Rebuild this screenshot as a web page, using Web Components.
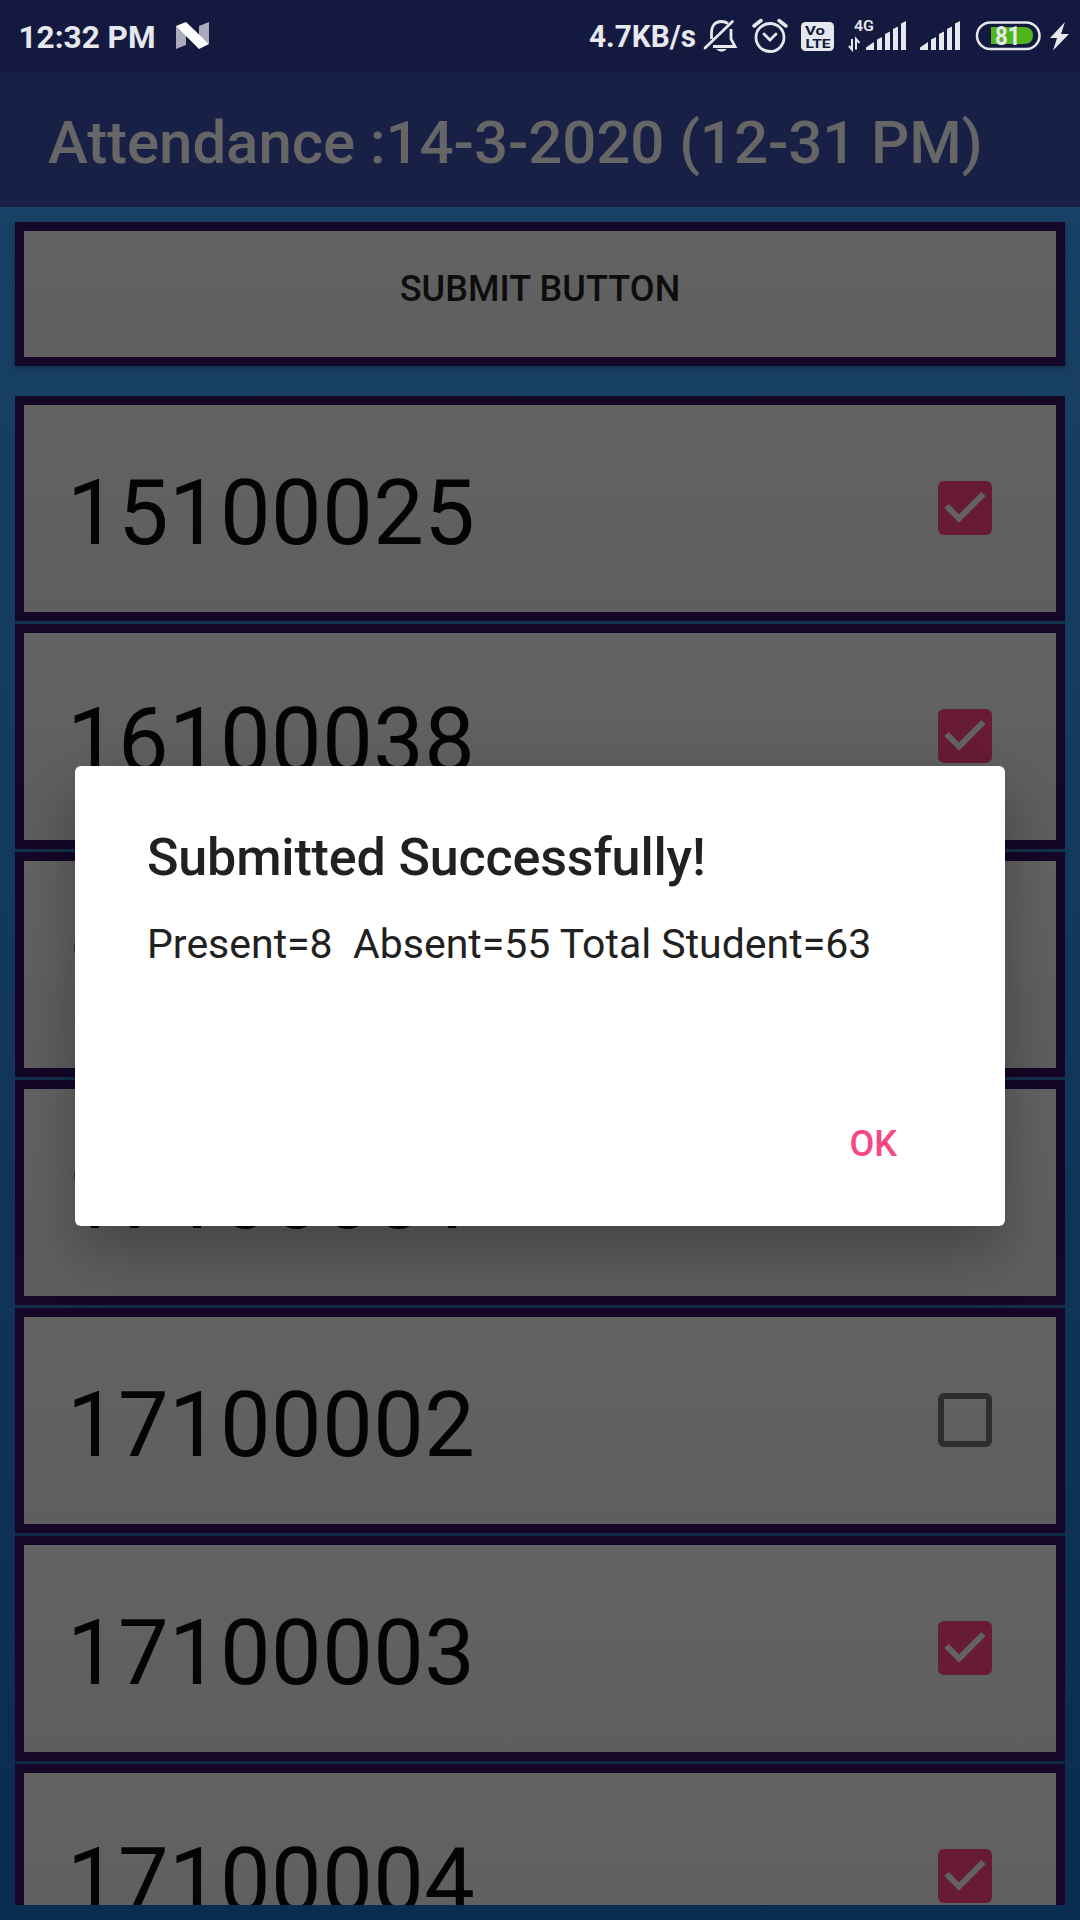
<!DOCTYPE html>
<html lang="en"><head><meta charset="utf-8"><title>Attendance</title>
<style>html,body{margin:0;background:#0b2d4f;font-family:Roboto,sans-serif}body{width:1080px;height:1920px;overflow:hidden}</style></head>
<body>
<attendance-screen>
  <status-bar></status-bar>
  <app-bar>Attendance :14-3-2020 (12-31 PM)</app-bar>
  <submit-button>SUBMIT BUTTON</submit-button>
  <student-list>
    <student-row checked>15100025</student-row>
    <student-row checked>16100038</student-row>
    <student-row>17100000</student-row>
    <student-row>17100001</student-row>
    <student-row>17100002</student-row>
    <student-row checked>17100003</student-row>
    <student-row checked>17100004</student-row>
  </student-list>
  <alert-dialog slot="dialog"><span slot="title">Submitted Successfully!</span><span slot="message">Present=8&nbsp; Absent=55 Total Student=63</span><span slot="action">OK</span></alert-dialog>
</attendance-screen>
<script>
const define=(name,html)=>customElements.define(name,class extends HTMLElement{
  constructor(){super();this.attachShadow({mode:'open'}).innerHTML=html;}
});
define('attendance-screen',`<style>
:host{display:flex;flex-direction:column;position:relative;width:1080px;height:1920px;overflow:hidden;background:linear-gradient(#194165 207px,#0a2c4e 1920px)}
</style><slot></slot><slot name="dialog"></slot>`);
define('status-bar',`<style>
:host{display:flex;align-items:center;height:72px;flex:none;background:#13193f;box-sizing:border-box}
svg{display:block;width:1080px;height:72px}text{font-family:Roboto,sans-serif;font-weight:700;fill:#e7e7ee}.dark{fill:#13193f;font-weight:700}
</style><svg viewBox="0 0 1080 72">
<text x="18.500" y="48" font-size="32" textLength="137" lengthAdjust="spacingAndGlyphs">12:32 PM</text>
<path d="M176 26 186 32V45L176 49ZM199 26 209 22V44L199 35Z" fill="#a9abbd"/><path d="M176 26 186 22 209 44 199 49Z" fill="#fff"/>
<text x="589" y="47" font-size="31" textLength="107" lengthAdjust="spacingAndGlyphs">4.7KB/s</text>
<g fill="none" stroke="#e7e7ee" stroke-width="2.8">
<path d="M711.5 39V33C711.5 26 715 21.5 721 21.5Q725 21.5 728 23.5M731 29V39L735 46.500H713"/><path d="M705 48 732.500 21.500" stroke-linecap="round"/>
<circle cx="770" cy="37.500" r="14"/><path d="M764 34 770 40 776 34" stroke-linecap="round"/><path d="M754 26 761 20.500M779 20.500 786 26" stroke-width="3.5" stroke-linecap="round"/></g>
<path d="M716 49H727Q721.500 54.500 716 49Z" fill="#e7e7ee"/>
<rect x="801" y="22" width="33" height="29" rx="4.500" fill="#e7e7ee"/>
<text class="dark" x="805" y="34.500" font-size="13.500" textLength="20" lengthAdjust="spacingAndGlyphs">Vo</text><text class="dark" x="805.500" y="47.500" font-size="13.500" textLength="25" lengthAdjust="spacingAndGlyphs">LTE</text>
<text x="854" y="31" font-size="15.500" textLength="20" lengthAdjust="spacingAndGlyphs" style="font-weight:600">4G</text>
<path d="M852 39V49.500L849 46M856 49.500V39L859.500 43" stroke="#e7e7ee" stroke-width="2" fill="none"/>
<g id="bars" fill="#e7e7ee"><path d="M866 50V47.500L874 42V50Z"/><path d="M877 50V39.500L882 37V50ZM885 50V34L890 31.500V50ZM893 50V29L898 26.500V50ZM901 50V23.500L906 21V50Z"/></g><use href="#bars" x="54"/>
<rect x="977" y="22.500" width="62.500" height="26.500" rx="13.250" fill="none" stroke="#e7e7ee" stroke-width="2.500"/>
<path d="M991 27H1024Q1033 27 1033 35.500T1024 44H991Z" fill="#50b41b"/>
<text x="995" y="44.500" font-size="25" textLength="25.500" lengthAdjust="spacingAndGlyphs">81</text>
<path d="M1065 22 1050 38H1057L1053 50.500 1069 34H1061Z" fill="#e7e7ee"/></svg>`);
define('app-bar',`<style>
:host{display:flex;align-items:center;height:135px;flex:none;box-sizing:border-box;padding:6px 0 0 48px;background:#192046;color:#666667;font:500 60px/70px Roboto,sans-serif;letter-spacing:-.08px;white-space:nowrap}
</style><slot></slot>`);
define('submit-button',`<style>
:host{display:flex;justify-content:center;align-items:center;box-sizing:border-box;height:144px;flex:none;margin:15px 15px 30px;border:9px solid #140727;padding-bottom:10px;background:linear-gradient(#636363,#5e5e60) padding-box;color:#0d0d0d;font:500 36px/42px Roboto,sans-serif;letter-spacing:.08px;box-shadow:0 2px 6px rgba(0,0,0,.3)}
</style><slot></slot>`);
define('student-list',`<style>
:host{display:flex;flex-direction:column;gap:3px;flex:1;min-height:0;margin:0 15px 15px;overflow:hidden;background:linear-gradient(#153550,#0e2a45)}
</style><slot></slot>`);
customElements.define('student-row',class extends HTMLElement{
  constructor(){super();this.attachShadow({mode:'open'}).innerHTML=`<style>
:host{display:flex;justify-content:space-between;align-items:center;box-sizing:border-box;height:225px;flex:none;border:9px solid #140727;padding:0 64px 0 43px;background:linear-gradient(#636363,#5e5e60) padding-box;color:#040404;font:400 90px/106px Roboto,sans-serif}
span{letter-spacing:.45px;padding-top:10px}svg{width:54px;height:54px;display:block;margin-bottom:1px}
</style><span><slot></slot></span>`+(this.hasAttribute('checked')
?`<svg viewBox="0 0 54 54"><rect width="54" height="54" rx="6" fill="#681b35"/><path d="M8.500 25 21 37.500 45.500 13" fill="none" stroke="#636364" stroke-width="6"/></svg>`
:`<svg viewBox="0 0 54 54"><rect x="3" y="3" width="48" height="48" rx="3" fill="none" stroke="#2d2d2d" stroke-width="6"/></svg>`);}
});
define('alert-dialog',`<style>
:host{position:absolute;left:75px;top:766px;width:930px;height:460px;box-sizing:border-box;display:flex;flex-direction:column;padding:61px 72px 0;border-radius:6px;background:#fff;color:#212121;box-shadow:0 24px 60px rgba(0,0,0,.3)}
.t{font:500 52px/62px Roboto,sans-serif;letter-spacing:-.15px;white-space:nowrap}.m{font:400 41px/50px Roboto,sans-serif;margin-top:30px;white-space:nowrap}
.a{font:500 36px/42px Roboto,sans-serif;color:#f84683;align-self:flex-end;margin:154px 36px 0 0}
</style><div class="t"><slot name="title"></slot></div><div class="m"><slot name="message"></slot></div><div class="a"><slot name="action"></slot></div>`);
</script>
</body></html>
